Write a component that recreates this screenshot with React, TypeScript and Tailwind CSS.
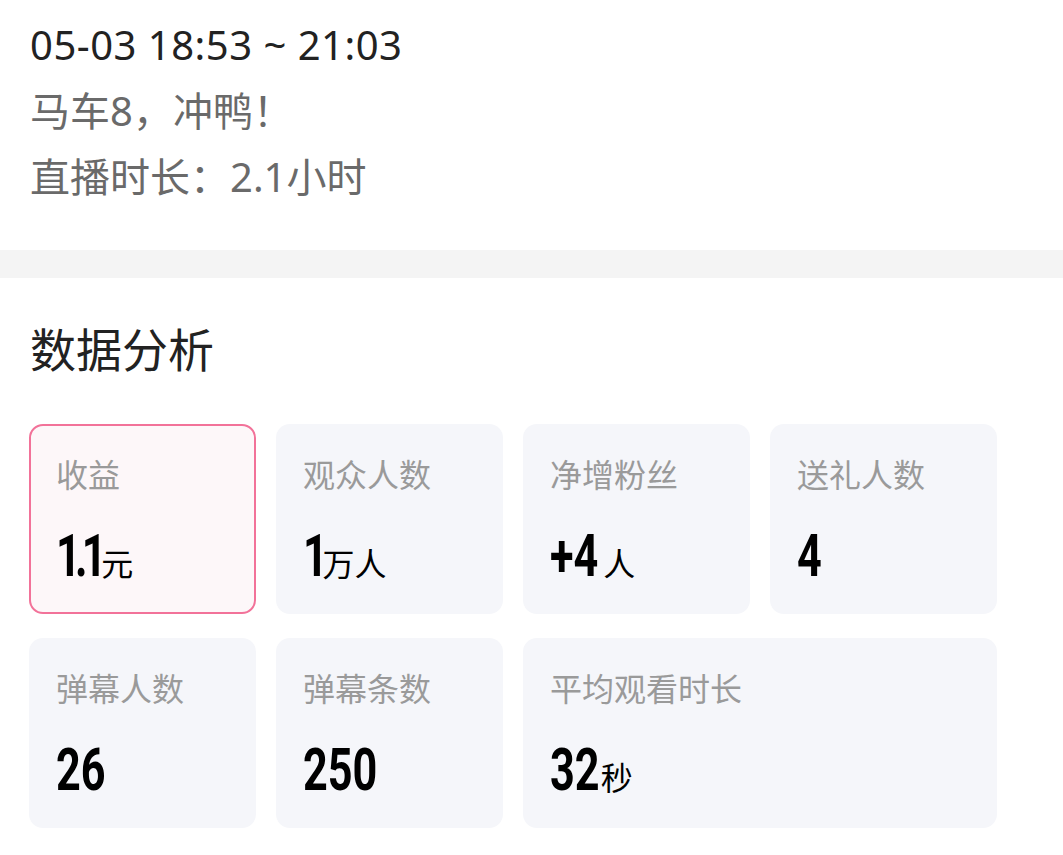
import React from 'react';

type Stat = {
    label: string;
    value: string;
    fix: string; // pulls the unit back after the number is squeezed
    unit?: string;
    unitGap?: string;
    active?: boolean;
    wide?: boolean;
};

const stats: Stat[] = [
    { label: '收益', value: '1.1', fix: 'mr-[-20px] tracking-[-8px]', unit: '元', active: true },
    { label: '观众人数', value: '1', fix: 'mr-[-12px] tracking-[-6px]', unit: '万人' },
    { label: '净增粉丝', value: '+4', fix: 'mr-[-19px]', unit: '人', unitGap: 'ml-[5px]' },
    { label: '送礼人数', value: '4', fix: 'mr-[-9px]' },
    { label: '弹幕人数', value: '26', fix: 'mr-[-19px]' },
    { label: '弹幕条数', value: '250', fix: 'mr-[-28px]' },
    { label: '平均观看时长', value: '32', fix: 'mr-[-19px]', unit: '秒', unitGap: 'ml-[1px]', wide: true },
];

const cjk = "font-['Noto_Sans_CJK_SC','Noto_Sans',sans-serif]";
const latin = "font-['Noto_Sans','Noto_Sans_CJK_SC',sans-serif]";

const StatCard: React.FC<{ stat: Stat }> = ({ stat }) => (
    <div
        className={`h-[190px] rounded-[14px] ${stat.wide ? 'col-span-2' : ''} ${
            stat.active ? 'bg-[#fdf7f9] border-2 border-[#f27299] pl-[25px] pt-[31px]' : 'bg-[#f5f6fa] pl-[27px] pt-[33px]'
        }`}
    >
        <div className={`${cjk} text-[32px] leading-[32px] text-[#9a9a9a]`}>{stat.label}</div>
        <div className="mt-[37px] flex items-baseline">
            <span
                className={`inline-block origin-left scale-x-[0.72] font-['Roboto',sans-serif] text-[60px] leading-[60px] font-bold text-black ${stat.fix}`}
            >
                {stat.value}
            </span>
            {stat.unit && (
                <span className={`${cjk} text-[32px] leading-[32px] text-black ${stat.unitGap ?? 'ml-[3px]'}`}>
                    {stat.unit}
                </span>
            )}
        </div>
    </div>
);

export default function App() {
    return (
        <div className={`min-h-screen w-[1063px] bg-white ${cjk}`}>
            <section className={`h-[250px] pl-[30px] pt-[12px] text-[40px] leading-[66px] ${latin}`}>
                <div className="text-[#222222] tracking-[0.5px]">05-03 18:53 ~ 21:03</div>
                <div className="text-[#6a6a6a]">马车8，冲鸭！</div>
                <div className="text-[#6a6a6a]">直播时长：2.1小时</div>
            </section>

            <div className="h-[28px] bg-[#f4f4f4]" />

            <section className="pl-[29px]">
                <h2 className="mt-[46px] pl-[1px] text-[46px] leading-[46px] text-[#222222]">数据分析</h2>
                <div className="mt-[54px] grid grid-cols-[repeat(4,227px)] gap-x-[20px] gap-y-[24px]">
                    {stats.map((s) => (
                        <StatCard key={s.label} stat={s} />
                    ))}
                </div>
            </section>
        </div>
    );
}
